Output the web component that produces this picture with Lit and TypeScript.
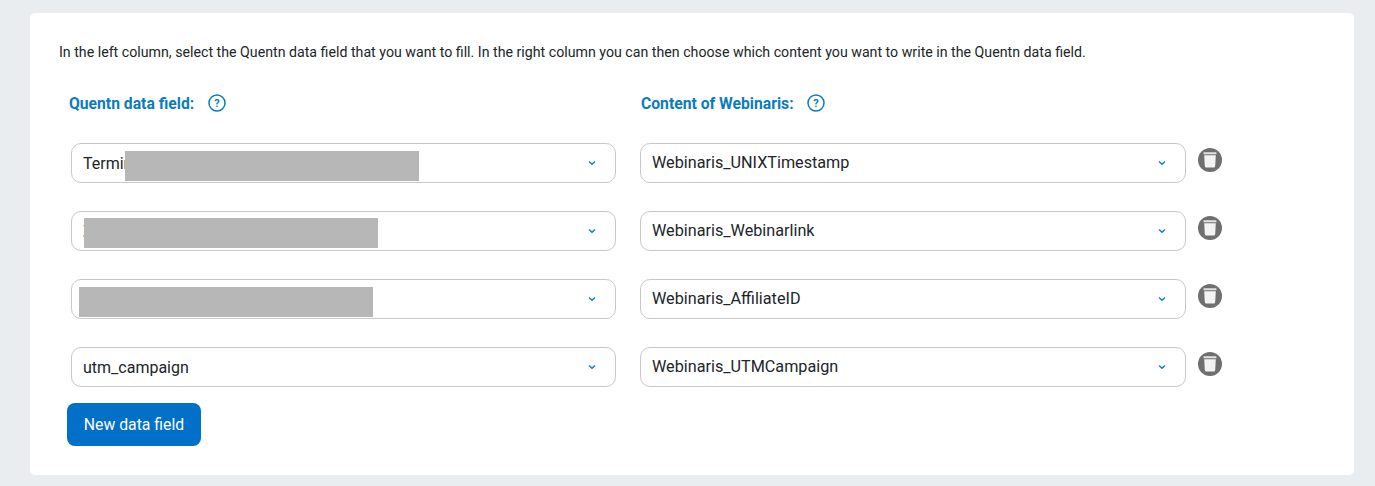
import { LitElement, html, css, svg } from "lit";
import { customElement } from "lit/decorators.js";

const rows = [
  { left: "Termin", right: "Webinaris_UNIXTimestamp", mask: { x: 53, y: 7 } },
  { left: "Z", right: "Webinaris_Webinarlink", mask: { x: 12, y: 6 } },
  { left: "", right: "Webinaris_AffiliateID", mask: { x: 7, y: 7 } },
  { left: "utm_campaign", right: "Webinaris_UTMCampaign", mask: null },
];

const chevron = svg`<svg class="chev" width="8" height="6" viewBox="0 0 8 6"><path d="M1 1.4 L4 4.2 L7 1.4" fill="none" stroke="#0a7cc1" stroke-width="1.4"/></svg>`;

@customElement("app-root")
export class AppRoot extends LitElement {
  static styles = css`
    :host { display: block; height: 486px; background: #e9edf0; padding: 13px 21px 0 30px; box-sizing: border-box; font-family: Roboto, "Liberation Sans", sans-serif; color: #212529; overflow: hidden; }
    .card { height: 462px; background: #fff; border-radius: 5px; box-sizing: border-box; padding: 30px 29px 0 29px; }
    .intro { margin: 0; font-size: 14.2px; line-height: 18px; height: 18px; white-space: nowrap; }
    .heads { display: flex; margin-top: 32px; padding-left: 10px; height: 20px; }
    .head { display: flex; align-items: center; gap: 13.5px; font-size: 15.7px; font-weight: 700; color: #0a7cc1; white-space: nowrap; }
    .head.l { width: 572px; }
    .q { width: 18px; height: 18px; display: block; }
    .list { display: flex; flex-direction: column; gap: 28px; margin-top: 30px; padding-left: 12px; }
    .row { display: flex; align-items: flex-start; }
    .sel { position: relative; box-sizing: border-box; height: 40px; border: 1px solid #c8c8c8; border-radius: 10px; background: #fff; display: flex; align-items: center; padding: 0 11px; font-size: 16px; justify-content: space-between; white-space: nowrap; }
    .sel.a { width: 545px; margin-right: 24px; }
    .sel.b { width: 546px; margin-right: 12px; font-size: 16.2px; }
    .sel.b span { margin-bottom: 2px; }
    .chev { display: block; margin-right: 8px; }
    .mask { position: absolute; width: 294px; height: 30px; background: #b7b7b7; }
    .trash { width: 24px; height: 24px; display: block; margin-top: 5px; }
    button { display: block; margin: 16px 0 0 8px; width: 134px; height: 43px; border: 0; border-radius: 8px; background: #0070c9; color: #fff; font-family: inherit; font-size: 15.8px; padding: 0; }
  `;

  private help() {
    return html`<svg class="q" viewBox="0 0 18 18"><circle cx="9" cy="9" r="8" fill="none" stroke="#0a7cc1" stroke-width="1.5"/><text x="9" y="13" text-anchor="middle" font-size="11" font-weight="700" fill="#0a7cc1" font-family="Roboto, sans-serif">?</text></svg>`;
  }

  private trash() {
    return html`<svg class="trash" viewBox="0 0 24 24"><circle cx="12" cy="12" r="12" fill="#6f6f6f"/><path d="M5.5 4.8 Q5.5 4.2 6.2 4.2 H17.8 Q18.5 4.2 18.5 4.8 V6.2 H5.5 Z" fill="#fff" opacity="0.8"/><path d="M6.2 7.2 H17.8 L17.2 18 Q17.1 19.5 15.8 19.5 H8.2 Q6.9 19.5 6.8 18 Z" fill="#f2f2f2"/></svg>`;
  }

  render() {
    return html`<div class="card">
      <p class="intro">In the left column, select the Quentn data field that you want to fill. In the right column you can then choose which content you want to write in the Quentn data field.</p>
      <div class="heads">
        <div class="head l">Quentn data field: ${this.help()}</div>
        <div class="head">Content of Webinaris: ${this.help()}</div>
      </div>
      <div class="list">
        ${rows.map((r) => html`<div class="row">
          <div class="sel a"><span>${r.left}</span>${chevron}
            ${r.mask ? html`<div class="mask" style="left:${r.mask.x}px;top:${r.mask.y}px"></div>` : ""}
          </div>
          <div class="sel b"><span>${r.right}</span>${chevron}</div>
          ${this.trash()}
        </div>`)}
      </div>
      <button>New data field</button>
    </div>`;
  }
}
